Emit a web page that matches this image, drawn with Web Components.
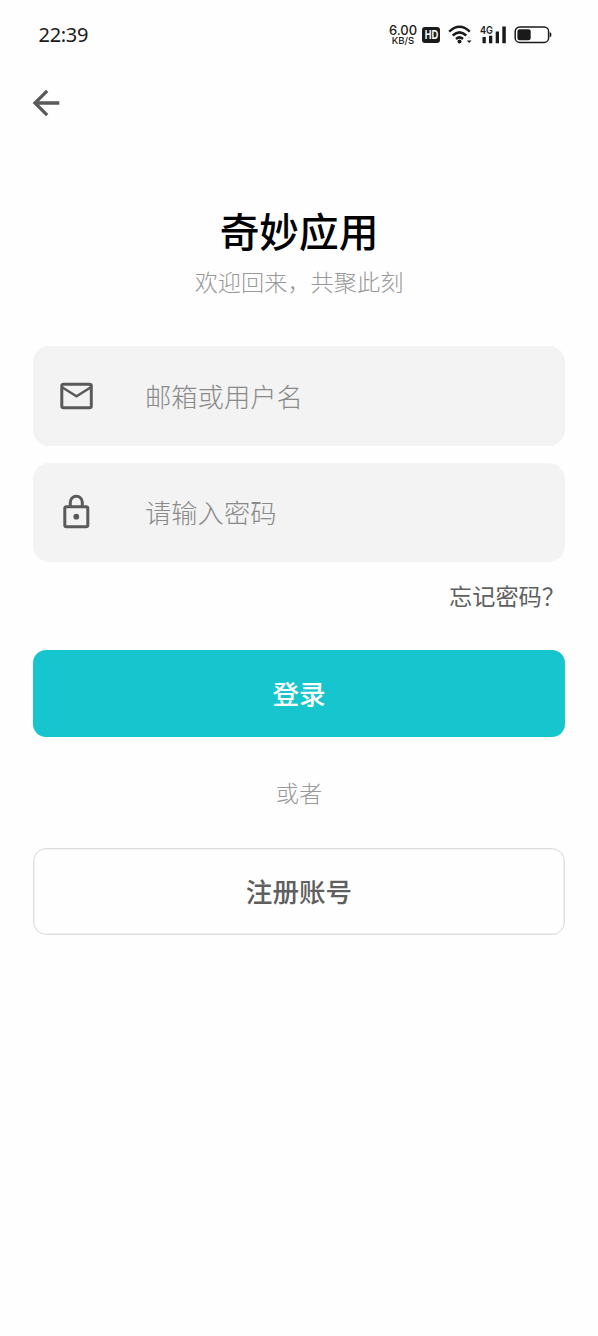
<!DOCTYPE html>
<html lang="zh-CN">
<head>
<meta charset="utf-8">
<title>登录</title>
<style>
html, body { margin: 0; background: #fefefe; }
body { font-family: "Noto Sans CJK SC", "Noto Sans", sans-serif; }
</style>
</head>
<body>
<login-page></login-page>
<script>
const define = (name, html) => customElements.define(name, class extends HTMLElement {
  constructor() {
    super();
    this.attachShadow({ mode: 'open' }).innerHTML = html;
  }
});

define('status-bar', `
<style>
:host { display: flex; height: 69px; box-sizing: border-box; padding: 0 46px 0 38.500px; align-items: center; justify-content: space-between; color: #1a1a1a; font-family: Inter, sans-serif; }
.time { font: 400 20px/24px "Noto Sans", sans-serif; letter-spacing: -0.3px; }
.right { display: flex; align-items: center; }
.speed { display: flex; flex-direction: column; align-items: center; width: 30px; font-weight: 500; }
.num { font-size: 13px; line-height: 12px; }
.unit { font-size: 9.500px; line-height: 10px; }
.hd { display: flex; justify-content: center; width: 18px; height: 16px; margin-left: 4px; border-radius: 3px; background: #1a1a1a; color: #fff; font: 700 13px/16px "Liberation Sans", sans-serif; }
.hd span { transform: scaleX(.72); }
svg { display: block; flex: none; overflow: visible; }
</style>
<span class="time">22:39</span>
<div class="right">
  <div class="speed"><span class="num">6.00</span><span class="unit">KB/S</span></div>
  <div class="hd"><span>HD</span></div>
  <svg style="margin-left:8px" width="26" height="20" viewBox="0 0 26 20" fill="none" stroke="#1a1a1a" stroke-width="2.500">
    <path d="M1.2 6.600Q11.500 -3 21.800 6.600M4.700 10.500Q11.500 4.200 18.300 10.500M8 14Q11.500 10.800 15 14"/>
    <circle cx="11.500" cy="16.500" r="2" fill="#1a1a1a" stroke="none"/>
    <path d="M18.800 13.700l2.400-2.700 2.400 2.700z" fill="#ddd" stroke="none"/><path d="M18.800 15.400h4.800l-2.400 2.700z" fill="#1a1a1a" stroke="none"/>
  </svg>
  <svg style="margin-left:6px" width="28" height="20" viewBox="0 0 28 20" fill="#1a1a1a">
    <text x="0" y="8.800" font-size="11" font-weight="600" font-family="Inter" textLength="13" lengthAdjust="spacingAndGlyphs">4G</text>
    <path d="M2.500 12h3.300v6.200H2.500zM9 10.800h3.300v7.400H9zM15.700 6.500H19v11.700h-3.300zM22.300 1.500h3.500v16.700h-3.500z"/>
  </svg>
  <svg style="margin-left:6px" width="38" height="18" viewBox="0 0 38 18">
    <rect x="1.200" y="1" width="33.400" height="15.400" rx="4.500" fill="none" stroke="#1a1a1a" stroke-width="1.500"/>
    <rect x="3.400" y="3.200" width="13.300" height="11" rx="2.200" fill="#1a1a1a"/>
    <path d="M36 6.500q1.200.4 1.200 2.200T36 10.900z" fill="#1a1a1a" stroke="#1a1a1a" stroke-width=".5"/>
  </svg>
</div>`);

define('app-bar', `
<style>
:host { display: flex; height: 68px; align-items: center; padding-left: 26px; }
svg { display: block; }
</style>
<svg width="40" height="40" viewBox="0 0 24 24" fill="#5a5a5a"><path d="M20 11H7.830l5.590-5.590L12 4l-8 8 8 8 1.410-1.410L7.830 13H20v-2z"/></svg>`);

define('welcome-header', `
<style>
:host { display: block; text-align: center; padding-top: 69px; }
h1 { margin: 0; font-size: 39.700px; line-height: 48px; font-weight: 500; color: #000; }
p { margin: 13px 0 0; font-size: 23.200px; line-height: 28px; font-weight: 300; color: #999; }
</style>
<h1><slot name="title"></slot></h1>
<p><slot></slot></p>`);

define('input-field', `
<style>
:host { display: flex; align-items: center; height: 99.500px; box-sizing: border-box; padding-left: 23px; gap: 49px; border-radius: 16px; background: #f3f3f3; color: #8a8a8a; font-size: 26.300px; line-height: 36px; font-weight: 300; }
::slotted(svg) { display: block; flex: none; }
</style>
<slot name="icon"></slot><span><slot></slot></span>`);

define('action-button', `
<style>
:host { display: flex; align-items: center; justify-content: center; height: 87px; box-sizing: border-box; padding-bottom: 1px; border-radius: 13px; font-size: 26.600px; line-height: 36px; font-weight: 500; background: #16c5ce; color: #fff; }
:host([outlined]) { background: #fefefe; border: 1px solid #dedede; box-shadow: inset 0 0 0 .5px #e4e4e4; color: #5f5f5f; }
</style>
<slot></slot>`);

define('login-page', `
<style>
:host { display: block; width: 598px; height: 1336px; background: #fefefe; overflow: hidden; }
main { display: flex; flex-direction: column; padding: 51px 33px 0; }
.second { margin-top: 17px; }
.forgot { align-self: flex-end; margin: 18px 0 0; font-size: 23.200px; line-height: 30px; color: #606060; font-weight: 400; }
.login { margin-top: 40px; }
.or { align-self: center; margin: 40px 0 41px; font-size: 23.200px; line-height: 30px; font-weight: 300; color: #999; }
</style>
<status-bar></status-bar>
<app-bar></app-bar>
<welcome-header><span slot="title">奇妙应用</span>欢迎回来，共聚此刻</welcome-header>
<main>
  <input-field>
    <svg slot="icon" width="40" height="40" viewBox="0 0 40 40" fill="none" stroke="#5a5a5a"><rect x="5.800" y="8.300" width="29.500" height="23.500" rx="1.800" stroke-width="3"/><path d="M6.500 11.500l14 8.800 14-8.800" stroke-width="2.500"/></svg>
    邮箱或用户名
  </input-field>
  <input-field class="second">
    <svg slot="icon" width="40" height="40" viewBox="0 0 40 40" fill="none" stroke="#5a5a5a" stroke-width="3"><rect x="8.800" y="14.800" width="23" height="20" rx="1.800"/><path d="M14.300 14.800V10.300a6 6 0 0 1 12 0v4.500"/><circle cx="20.300" cy="24.700" r="2.900" fill="#5a5a5a" stroke="none"/></svg>
    请输入密码
  </input-field>
  <span class="forgot">忘记密码？</span>
  <action-button class="login">登录</action-button>
  <span class="or">或者</span>
  <action-button outlined>注册账号</action-button>
</main>`);
</script>
</body>
</html>
